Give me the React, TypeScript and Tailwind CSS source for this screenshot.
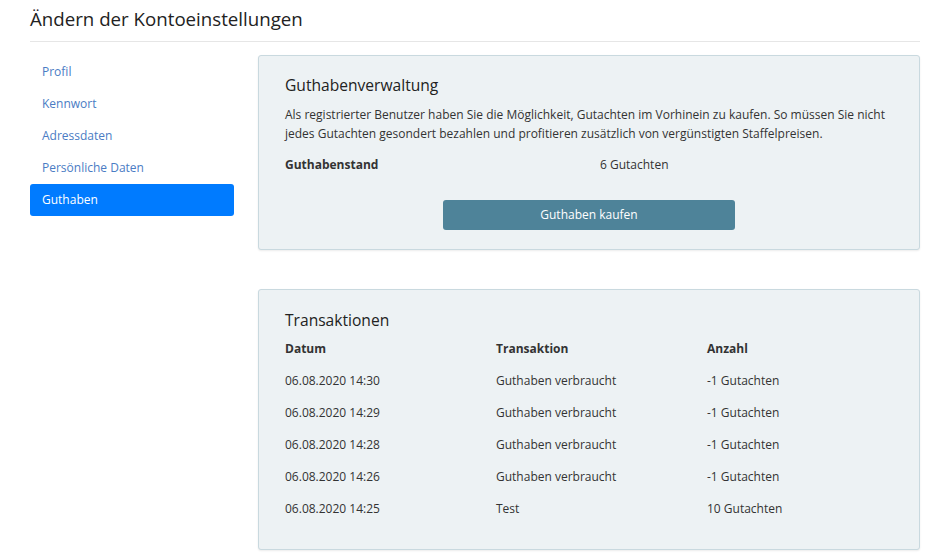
import React from "react";

const navItems = ["Profil", "Kennwort", "Adressdaten", "Persönliche Daten", "Guthaben"];

const transactions = [
  { date: "06.08.2020 14:30", label: "Guthaben verbraucht", amount: "-1 Gutachten" },
  { date: "06.08.2020 14:29", label: "Guthaben verbraucht", amount: "-1 Gutachten" },
  { date: "06.08.2020 14:28", label: "Guthaben verbraucht", amount: "-1 Gutachten" },
  { date: "06.08.2020 14:26", label: "Guthaben verbraucht", amount: "-1 Gutachten" },
  { date: "06.08.2020 14:25", label: "Test", amount: "10 Gutachten" },
];

export default function App() {
  return (
    <div
      className="w-[929px] h-[560px] overflow-hidden bg-white text-[#333] text-[12px]"
      style={{ fontFamily: '"Open Sans", "Noto Sans", sans-serif' }}
    >
      <div className="pl-[30px] pr-[9px]">
        <h1 className="text-[18.7px] leading-[26px] pt-[6px] pb-[9px] border-b border-[#e6e6e6] text-[#222]">
          Ändern der Kontoeinstellungen
        </h1>

        <div className="flex pt-[13px]">
          {/* Sidebar */}
          <nav className="w-[204px] shrink-0 flex flex-col pt-[1px]">
            {navItems.map((item) => (
              <a
                key={item}
                href="#"
                className={
                  item === "Guthaben"
                    ? "h-[32px] flex items-center px-3 rounded-[3px] bg-[#007bff] text-white"
                    : "h-[32px] flex items-center px-3 text-[#4a7cc4]"
                }
              >
                {item}
              </a>
            ))}
          </nav>

          <div className="flex-1 ml-[24px] flex flex-col gap-[39px]">
            {/* Guthabenverwaltung */}
            <section className="border border-[#c9d9df] rounded-[3px] bg-[#edf2f4] shadow-[0_1px_2px_rgba(0,0,0,0.08)] px-[26px] pt-[17px] pb-[19px]">
              <h2 className="text-[15.6px] leading-[24px] text-[#222] mb-[8px]">Guthabenverwaltung</h2>
              <p className="leading-[19px]">
                Als registrierter Benutzer haben Sie die Möglichkeit, Gutachten im Vorhinein zu kaufen. So müssen Sie nicht
                jedes Gutachten gesondert bezahlen und profitieren zusätzlich von vergünstigten Staffelpreisen.
              </p>
              <div className="grid grid-cols-[315px_1fr] mt-[12px] leading-[19px]">
                <span className="font-bold">Guthabenstand</span>
                <span>6 Gutachten</span>
              </div>
              <div className="flex justify-center mt-[26px]">
                <button className="w-[292px] h-[30px] rounded-[3px] bg-[#4e8399] text-white">Guthaben kaufen</button>
              </div>
            </section>

            {/* Transaktionen */}
            <section className="border border-[#c9d9df] rounded-[3px] bg-[#edf2f4] shadow-[0_1px_2px_rgba(0,0,0,0.08)] px-[26px] pt-[18px] pb-[24px]">
              <h2 className="text-[15.6px] leading-[24px] text-[#222] mb-[1px]">Transaktionen</h2>
              <div className="grid grid-cols-[211px_211px_1fr]">
                <span className="font-bold h-[32px] flex items-center">Datum</span>
                <span className="font-bold h-[32px] flex items-center">Transaktion</span>
                <span className="font-bold h-[32px] flex items-center">Anzahl</span>
                {transactions.map((t, i) => (
                  <React.Fragment key={i}>
                    <span className="h-[32px] flex items-center">{t.date}</span>
                    <span className="h-[32px] flex items-center">{t.label}</span>
                    <span className="h-[32px] flex items-center">{t.amount}</span>
                  </React.Fragment>
                ))}
              </div>
            </section>
          </div>
        </div>
      </div>
    </div>
  );
}
